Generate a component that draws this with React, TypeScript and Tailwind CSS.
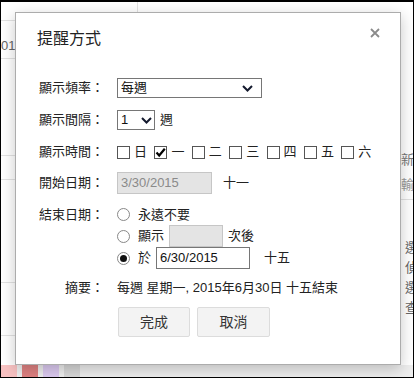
import React from "react";

const Chevron = () => (
  <svg width="11" height="7" viewBox="0 0 11 7" className="block">
    <path d="M1 1 L5.5 5.5 L10 1" fill="none" stroke="#141a2e" strokeWidth="2" />
  </svg>
);

const Checkbox = ({ checked }: { checked?: boolean }) => (
  <span className="w-[13px] h-[13px] border border-[#555] bg-white flex items-center justify-center shrink-0">
    {checked && (
      <svg width="11" height="11" viewBox="0 0 11 11" className="block">
        <path d="M1.5 5.5 L4.2 8.5 L9.8 1.8" fill="none" stroke="#000" strokeWidth="2.2" />
      </svg>
    )}
  </span>
);

const Radio = ({ checked }: { checked?: boolean }) => (
  <span className="w-[13px] h-[13px] rounded-full border border-[#888] bg-white flex items-center justify-center shrink-0">
    {checked && <span className="w-[7px] h-[7px] rounded-full bg-[#111]" />}
  </span>
);

const Label = ({ children }: { children: React.ReactNode }) => (
  <div className="w-[67px] text-right shrink-0 mr-[13px] text-[#222]">{children}</div>
);

export default function App() {
  const days = ["日", "一", "二", "三", "四", "五", "六"];
  return (
    <div className="w-[414px] h-[378px] relative overflow-hidden border border-t-2 border-black bg-white font-['Liberation_Sans','Noto_Sans_CJK_TC',sans-serif] text-[13px]">
      {/* background fragments */}
      <div className="absolute left-0 top-[18px] w-[14px] h-px bg-[#e2e2e2]" />
      <div className="absolute left-0 top-[36px] text-[#666] text-[13px] leading-4">01</div>
      <div className="absolute left-0 top-[56px] w-[14px] h-px bg-[#e2e2e2]" />
      <div className="absolute left-0 top-[153px] w-[14px] h-px bg-[#e2e2e2]" />
      <div className="absolute left-0 top-[177px] w-[14px] h-px bg-[#e2e2e2]" />
      <div className="absolute left-0 top-[280px] w-[14px] h-px bg-[#e2e2e2]" />
      <div className="absolute left-0 top-[333px] w-[14px] h-px bg-[#e2e2e2]" />
      <div className="absolute left-[136px] top-0 w-px h-[10px] bg-[#e2e2e2]" />
      <div className="absolute left-[400px] top-[150px] text-[#777] text-[13px] leading-4 whitespace-nowrap">新增</div>
      <div className="absolute left-[400px] top-[175px] text-[#999] text-[13px] leading-4 whitespace-nowrap">輸入</div>
      <div className="absolute left-[400px] top-[197px] w-[14px] h-px bg-[#e2e2e2]" />
      <div className="absolute left-[404px] top-[238px] text-[#666] text-[13px] leading-4 whitespace-nowrap">選</div>
      <div className="absolute left-[404px] top-[258px] text-[#666] text-[13px] leading-4 whitespace-nowrap">偵</div>
      <div className="absolute left-[404px] top-[278px] text-[#666] text-[13px] leading-4 whitespace-nowrap">選</div>
      <div className="absolute left-[404px] top-[298px] text-[#666] text-[13px] leading-4 whitespace-nowrap">查</div>
      <div className="absolute left-0 bottom-0 w-full h-[12px] bg-[#eeeeee] flex gap-[5px]">
        <div className="w-[16px] h-full bg-[#f8c2c2]" />
        <div className="w-[16px] h-full bg-[#df8282]" />
        <div className="w-[16px] h-full bg-[#dccaf0]" />
        <div className="w-[16px] h-full bg-[#d8d8d8]" />
      </div>

      {/* dialog */}
      <div className="absolute left-[14px] top-[10px] w-[386px] h-[353px] bg-white border border-[#acacac] shadow-[0_4px_14px_rgba(0,0,0,0.22)] pl-[21px] pt-[16px] flex flex-col">
        <svg width="10" height="10" viewBox="0 0 10 10" className="absolute left-[354px] top-[15px]">
          <path d="M1 1 L9 9 M9 1 L1 9" stroke="#8a8a8a" strokeWidth="1.8" />
        </svg>
        <div className="h-5 leading-5 text-[16px] text-[#222]">提醒方式</div>

        <div className="mt-[29px] h-5 flex items-center">
          <Label>顯示頻率：</Label>
          <div className="w-[145px] h-5 border border-[#767676] flex items-center justify-between pl-[3px] pr-[8px] text-[#111]">
            <span>每週</span>
            <Chevron />
          </div>
        </div>

        <div className="mt-[12px] h-5 flex items-center">
          <Label>顯示間隔：</Label>
          <div className="w-[38px] h-5 border border-[#767676] flex items-center justify-between pl-[3px] pr-[2px] text-[#111]">
            <span>1</span>
            <Chevron />
          </div>
          <span className="ml-[5px] text-[#222]">週</span>
        </div>

        <div className="mt-[12px] h-5 flex items-center">
          <Label>顯示時間：</Label>
          <div className="grid grid-cols-[repeat(7,37.4px)]">
            {days.map((d, i) => (
              <div key={d} className="flex items-center">
                <Checkbox checked={i === 1} />
                <span className="ml-[4px] text-[#222]">{d}</span>
              </div>
            ))}
          </div>
        </div>

        <div className="mt-[10px] h-[22px] flex items-center">
          <Label>開始日期：</Label>
          <div className="w-[95px] h-[22px] border border-[#c6c6c6] bg-[#e4e4e4] pl-[3px] flex items-center text-[#8a8a8a]">
            3/30/2015
          </div>
          <span className="ml-[11px] text-[#222]">十一</span>
        </div>

        <div className="mt-[10px] flex">
          <div className="h-[22px] flex items-center">
            <Label>結束日期：</Label>
          </div>
          <div className="flex flex-col">
            <div className="h-[21px] flex items-center">
              <Radio />
              <span className="ml-[8px] text-[#222]">永遠不要</span>
            </div>
            <div className="h-[22px] flex items-center">
              <Radio />
              <span className="ml-[8px] text-[#222]">顯示</span>
              <div className="ml-[5px] w-[54px] h-[22px] border border-[#c6c6c6] bg-[#e4e4e4]" />
              <span className="ml-[5px] text-[#222]">次後</span>
            </div>
            <div className="h-[22px] flex items-center">
              <Radio checked />
              <span className="ml-[8px] text-[#222]">於</span>
              <div className="ml-[5px] w-[94px] h-[22px] border border-[#767676] bg-white pl-[3px] flex items-center text-[#111]">
                6/30/2015
              </div>
              <span className="ml-[14px] text-[#222]">十五</span>
            </div>
          </div>
        </div>

        <div className="mt-[9px] h-5 flex items-center">
          <Label>摘要：</Label>
          <span className="text-[#222] whitespace-nowrap">每週 星期一, 2015年6月30日 十五結束</span>
        </div>

        <div className="mt-[9px] flex pl-[81px] gap-[7px]">
          <button className="w-[72px] h-[30px] rounded-[2px] border border-[#dcdcdc] bg-[#f3f3f3] text-[14px] text-[#333]">
            完成
          </button>
          <button className="w-[73px] h-[30px] rounded-[2px] border border-[#dcdcdc] bg-[#f3f3f3] text-[14px] text-[#333]">
            取消
          </button>
        </div>
      </div>
    </div>
  );
}
